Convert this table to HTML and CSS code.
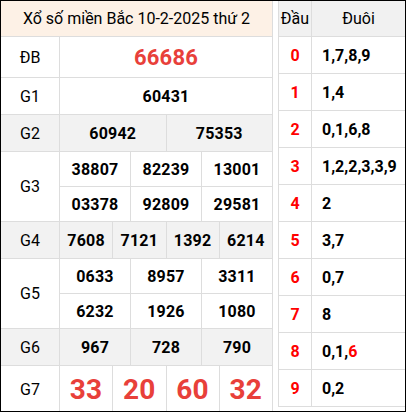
FILE: index.html
```html
<!DOCTYPE html>
<html lang="vi">
<head>
<meta charset="utf-8">
<link rel="stylesheet" href="styles.css">
</head>
<body>
<div class="frame">
  <div class="kq">
    <div class="kq-head">Xổ số miền Bắc 10-2-2025 thứ 2</div>
    <div class="row r-db"><div class="lbl">ĐB</div><div class="vals c1"><div class="v big">66686</div></div></div>
    <div class="row r-g1"><div class="lbl">G1</div><div class="vals c1"><div class="v">60431</div></div></div>
    <div class="row r-g2 alt"><div class="lbl">G2</div><div class="vals c2"><div class="v">60942</div><div class="v">75353</div></div></div>
    <div class="row r-g3"><div class="lbl">G3</div><div class="vals c3 two">
      <div class="v">38807</div><div class="v">82239</div><div class="v">13001</div>
      <div class="v">03378</div><div class="v">92809</div><div class="v">29581</div>
    </div></div>
    <div class="row r-g4 alt"><div class="lbl">G4</div><div class="vals c4"><div class="v">7608</div><div class="v">7121</div><div class="v">1392</div><div class="v">6214</div></div></div>
    <div class="row r-g5"><div class="lbl">G5</div><div class="vals c3 two">
      <div class="v">0633</div><div class="v">8957</div><div class="v">3311</div>
      <div class="v">6232</div><div class="v">1926</div><div class="v">1080</div>
    </div></div>
    <div class="row r-g6 alt"><div class="lbl">G6</div><div class="vals c3"><div class="v">967</div><div class="v">728</div><div class="v">790</div></div></div>
    <div class="row r-g7"><div class="lbl">G7</div><div class="vals c4"><div class="v huge">33</div><div class="v huge">20</div><div class="v huge">60</div><div class="v huge">32</div></div></div>
  </div>
  <div class="lt">
    <div class="lt-row lt-head"><div class="dau">Đầu</div><div class="duoi center">Đuôi</div></div>
    <div class="lt-row"><div class="dau red">0</div><div class="duoi">1,7,8,9</div></div>
    <div class="lt-row"><div class="dau red">1</div><div class="duoi">1,4</div></div>
    <div class="lt-row"><div class="dau red">2</div><div class="duoi">0,1,6,8</div></div>
    <div class="lt-row"><div class="dau red">3</div><div class="duoi">1,2,2,3,3,9</div></div>
    <div class="lt-row"><div class="dau red">4</div><div class="duoi">2</div></div>
    <div class="lt-row"><div class="dau red">5</div><div class="duoi">3,7</div></div>
    <div class="lt-row"><div class="dau red">6</div><div class="duoi">0,7</div></div>
    <div class="lt-row"><div class="dau red">7</div><div class="duoi">8</div></div>
    <div class="lt-row"><div class="dau red">8</div><div class="duoi">0,1,<span class="red">6</span></div></div>
    <div class="lt-row"><div class="dau red">9</div><div class="duoi">0,2</div></div>
  </div>
</div>
</body>
</html>
```
FILE: styles.css
```css
* { box-sizing: border-box; margin: 0; padding: 0; }
html, body { background: #fff; }
body {
  margin: 0;
  font-family: Roboto, "Liberation Sans", Arial, sans-serif;
  color: #000;
}
.frame {
  width: 406px;
  height: 412px;
  border: 1px solid #000;
  display: flex;
  align-items: flex-start;
  gap: 5px;
  overflow: hidden;
}
.kq {
  width: 272px;
  flex: none;
  display: flex;
  flex-direction: column;
}
.kq-head {
  height: 36px;
  background: #fdf1e6;
  border-right: 1px solid #ddd;
  border-bottom: 1px solid #ddd;
  display: flex;
  align-items: center;
  justify-content: center;
  font-size: 16px;
  padding-bottom: 1px;
}
.row {
  display: flex;
  border-bottom: 1px solid #ddd;
}
.row.alt { background: #f2f2f2; }
.r-db { height: 41px; }
.r-g1, .r-g2, .r-g4, .r-g6 { height: 37px; }
.r-g3, .r-g5 { height: 70px; }
.r-g7 { height: 46px; border-bottom: none; }
.lbl {
  width: 59px;
  flex: none;
  border-right: 1px solid #ddd;
  display: flex;
  align-items: center;
  justify-content: center;
  font-size: 16px;
}
.vals {
  flex: 1;
  display: grid;
}
.vals.c1 { grid-template-columns: 1fr; }
.vals.c2 { grid-template-columns: repeat(2, 1fr); }
.vals.c3 { grid-template-columns: repeat(3, 1fr); }
.vals.c4 { grid-template-columns: repeat(4, 1fr); }
.vals.two { grid-template-rows: 35px 35px; }
.vals.two .v:nth-child(-n+3) { border-bottom: 1px solid #ddd; }
.v {
  border-right: 1px solid #ddd;
  display: flex;
  align-items: center;
  justify-content: center;
  font-size: 16px;
  font-weight: bold;
  letter-spacing: 0.2px;
}
.v.big {
  font-size: 22px;
  color: #e8403a;
}
.v.huge {
  font-size: 28px;
  color: #e8403a;
}
.lt {
  width: 127px;
  flex: none;
  border-left: 1px solid #ddd;
  display: flex;
  flex-direction: column;
}
.lt-row {
  height: 37px;
  display: flex;
  border-bottom: 1px solid #ddd;
}
.lt-head {
  height: 36px;
  background: #f1f1f1;
}
.dau {
  width: 33px;
  flex: none;
  border-right: 1px solid #ddd;
  display: flex;
  align-items: center;
  justify-content: center;
  font-size: 16px;
}
.lt-row:not(.lt-head) .dau { font-weight: bold; }
.duoi {
  flex: 1;
  display: flex;
  align-items: center;
  padding-left: 10px;
  font-size: 16px;
  font-weight: bold;
}
.duoi.center {
  justify-content: center;
  padding-left: 0;
  font-weight: normal;
}
.red { color: #f00; }
```
